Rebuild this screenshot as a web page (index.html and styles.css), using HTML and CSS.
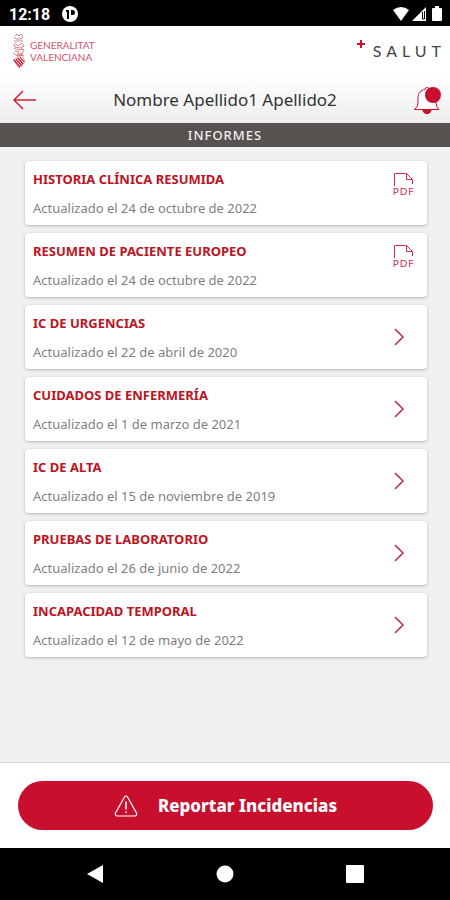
FILE: index.html
```html
<!DOCTYPE html>
<html lang="es">
<head>
  <meta charset="UTF-8">
  <meta name="viewport" content="width=device-width, initial-scale=1.0">
  <title>Informes</title>
  <link rel="stylesheet" href="styles.css">
</head>
<body>
  <div class="status-bar">
    <span class="hora">12:18</span>
    <svg width="16" height="16" viewBox="0 0 16 16">
      <circle cx="8" cy="8" r="8" fill="#fff"/>
      <path d="M4 4h3v9H5V6H4zM9 4h1.500a2.500 2.500 0 0 1 0 5H9z" fill="#000"/>
    </svg>
    <div class="status-icons">
      <svg width="18" height="16" viewBox="0 0 18 16"><path d="M1 4q8-6 16 0L9 15z" fill="#fff"/></svg>
      <svg width="14" height="16" viewBox="0 0 14 16">
        <path d="M14 1v14H0z" fill="#fff"/>
        <path d="M10.500 6v7h2V5" fill="none" stroke="#000" stroke-width="1"/>
      </svg>
      <svg class="bateria" width="10" height="16" viewBox="0 0 10 16"><path d="M3 0h4v2h2q1 0 1 1v11q0 1-1 1H1q-1 0-1-1V3q0-1 1-1h2z" fill="#fff"/></svg>
    </div>
  </div>

  <header class="marca">
    <div class="generalitat">
      <svg width="14" height="36" viewBox="0 0 14 36" fill="none" stroke="#d0606f">
        <path d="M3 3l2-2 2 2 2-2 2 3-2 2H4L2 4M2 8h9M3 10l3 3 4-3 2 3-4 2-5-1-1-3M2 15l4 2 5-1M3 18l4 1-2 3 5-1 2-4-3-1M1 20l4 3 5-1M8 20l4 3" stroke-width=".8"/>
        <path d="M1 27L10 22l3 7-6 6z" stroke-width=".6"/>
        <path d="M2 27l6 7M4 26l6 7M6 25l5 6M8 24l4 5" stroke="#c4122d" stroke-width="1.200"/>
      </svg>
      <div class="generalitat-texto">
        <span>GENERALITAT</span>
        <span>VALENCIANA</span>
      </div>
    </div>
    <div class="salut">
      <svg width="8" height="8" viewBox="0 0 8 8"><path d="M4 0v8M0 4h8" stroke="#c8102e" stroke-width="2"/></svg>
      <span>SALUT</span>
    </div>
  </header>

  <nav class="cabecera">
    <button class="icon-btn" type="button" aria-label="Volver">
      <svg width="24" height="20" viewBox="0 0 24 20" fill="none" stroke="#c8202e" stroke-width="1.500">
        <path d="M10 1L1 10l9 9M1 10h22"/>
      </svg>
    </button>
    <h1>Nombre Apellido1 Apellido2</h1>
    <button class="icon-btn" type="button" aria-label="Notificaciones">
      <svg width="28" height="28" viewBox="0 0 28 28">
        <path d="M9 23h10q-1 5-5 5t-5-5z" fill="#c8102e"/>
        <path d="M1.500 23.500h24.500q-3-2.500-3-6.500v-5c0-5-3-8-7-8.500q0-2-2-2t-2 2c-4 .5-7 3.500-7 8.500v5q0 4-3.500 6.500z" fill="#fff" stroke="#c8102e"/>
        <path d="M10 24h8q-1 4-4 4t-4-4z" fill="#c8102e"/>
        <circle cx="20" cy="9" r="8" fill="#c8102e"/>
      </svg>
    </button>
  </nav>

  <h2 class="seccion">INFORMES</h2>

  <main class="informes">
    <a class="card" href="#">
      <div>
        <h3>HISTORIA CLÍNICA RESUMIDA</h3>
        <p>Actualizado el 24 de octubre de 2022</p>
      </div>
      <div class="pdf">
        <svg width="22" height="14" viewBox="0 0 22 14"><path d="M1.500 14V1.500h12l6 6V12M13.500 1.500v6h6" fill="none" stroke="#c8304a"/></svg>
        <span>PDF</span>
      </div>
    </a>
    <a class="card" href="#">
      <div>
        <h3>RESUMEN DE PACIENTE EUROPEO</h3>
        <p>Actualizado el 24 de octubre de 2022</p>
      </div>
      <div class="pdf">
        <svg width="22" height="14" viewBox="0 0 22 14"><path d="M1.500 14V1.500h12l6 6V12M13.500 1.500v6h6" fill="none" stroke="#c8304a"/></svg>
        <span>PDF</span>
      </div>
    </a>
    <a class="card" href="#">
      <div>
        <h3>IC DE URGENCIAS</h3>
        <p>Actualizado el 22 de abril de 2020</p>
      </div>
      <svg class="flecha" viewBox="0 0 10 18"><path d="M1 1l8 8-8 8"/></svg>
    </a>
    <a class="card" href="#">
      <div>
        <h3>CUIDADOS DE ENFERMERÍA</h3>
        <p>Actualizado el 1 de marzo de 2021</p>
      </div>
      <svg class="flecha" viewBox="0 0 10 18"><path d="M1 1l8 8-8 8"/></svg>
    </a>
    <a class="card" href="#">
      <div>
        <h3>IC DE ALTA</h3>
        <p>Actualizado el 15 de noviembre de 2019</p>
      </div>
      <svg class="flecha" viewBox="0 0 10 18"><path d="M1 1l8 8-8 8"/></svg>
    </a>
    <a class="card" href="#">
      <div>
        <h3>PRUEBAS DE LABORATORIO</h3>
        <p>Actualizado el 26 de junio de 2022</p>
      </div>
      <svg class="flecha" viewBox="0 0 10 18"><path d="M1 1l8 8-8 8"/></svg>
    </a>
    <a class="card" href="#">
      <div>
        <h3>INCAPACIDAD TEMPORAL</h3>
        <p>Actualizado el 12 de mayo de 2022</p>
      </div>
      <svg class="flecha" viewBox="0 0 10 18"><path d="M1 1l8 8-8 8"/></svg>
    </a>
  </main>

  <footer class="pie">
    <button class="reportar" type="button">
      <svg width="24" height="22" viewBox="0 0 24 22" fill="none" stroke="#fff" stroke-linecap="round">
        <path d="M10.500 2q1.500-2 3 0l9 16q1 3-2 3h-17q-3 0-2-3z" stroke-width="1.200"/>
        <path d="M12 7v7M12 17v.5" stroke-width="1.500"/>
      </svg>
      Reportar Incidencias
    </button>
  </footer>

  <div class="nav-android">
    <button class="icon-btn" type="button" aria-label="Atrás">
      <svg width="18" height="18" viewBox="0 0 18 18"><path d="M17 0v18L1 9z" fill="#fff"/></svg>
    </button>
    <button class="icon-btn" type="button" aria-label="Inicio">
      <svg width="18" height="18" viewBox="0 0 18 18"><circle cx="9" cy="9" r="8.500" fill="#fff"/></svg>
    </button>
    <button class="icon-btn" type="button" aria-label="Recientes">
      <svg width="18" height="18" viewBox="0 0 18 18"><rect width="18" height="18" rx="1" fill="#fff"/></svg>
    </button>
  </div>
</body>
</html>
```

FILE: styles.css
```css
* {
  box-sizing: border-box;
}

body {
  margin: 0;
  min-height: 100vh;
  display: flex;
  flex-direction: column;
  font-family: "Noto Sans", "Open Sans", sans-serif;
  background: #f0f0f0;
}

h1, h2, h3, p {
  margin: 0;
}

svg {
  display: block;
  flex: none;
}

.icon-btn {
  padding: 0;
  border: none;
  background: none;
  cursor: pointer;
}

.status-bar {
  display: flex;
  align-items: center;
  gap: 12px;
  height: 26px;
  padding: 2px 8px 0 9px;
  background: #000;
  color: #fff;
}

.hora {
  font: bold 16px Roboto, sans-serif;
}

.status-icons {
  display: flex;
  gap: 2px;
  margin-left: auto;
}

.bateria {
  margin-left: 4px;
}

.marca {
  display: flex;
  justify-content: space-between;
  align-items: center;
  height: 50px;
  padding: 0 9px 0 12px;
  background: #fff;
}

.generalitat {
  display: flex;
  align-items: center;
  gap: 4px;
}

.generalitat-texto {
  display: flex;
  flex-direction: column;
  font-family: Lato, sans-serif;
  font-size: 10px;
  line-height: 12px;
  color: #cf5566;
}

.salut {
  display: flex;
  gap: 8px;
}

.salut svg {
  margin-top: 1px;
}

.salut span {
  font-family: Lato, sans-serif;
  font-size: 16px;
  line-height: 24px;
  letter-spacing: 5px;
  margin-right: -5px;
  color: #444;
}

.cabecera {
  display: flex;
  justify-content: space-between;
  align-items: center;
  height: 47px;
  padding: 0 9px 0 13px;
  background: linear-gradient(#fff, #ededed);
}

.cabecera h1 {
  font-size: 17px;
  font-weight: normal;
  line-height: 24px;
  color: #333;
}

.seccion {
  height: 24px;
  font-size: 13px;
  font-weight: 500;
  line-height: 24px;
  letter-spacing: 1px;
  text-align: center;
  color: #f0f0f0;
  background: #575150;
}

.informes {
  flex: 1;
  display: flex;
  flex-direction: column;
  gap: 8px;
  padding: 14px 23px 14px 25px;
}

.card {
  display: flex;
  justify-content: space-between;
  align-items: center;
  height: 64px;
  padding: 0 12px 0 8px;
  border-radius: 4px;
  background: #fff;
  box-shadow: 0 1px 3px rgba(0, 0, 0, 0.25);
  text-decoration: none;
}

.card h3 {
  margin-bottom: 9px;
  font-size: 13px;
  font-weight: bold;
  line-height: 20px;
  color: #bd1322;
}

.card p {
  font-size: 13px;
  line-height: 20px;
  color: #808080;
}

.pdf {
  align-self: flex-start;
  margin-top: 11px;
  font-family: Lato, sans-serif;
  font-size: 10px;
  line-height: 11px;
  letter-spacing: 1px;
  color: #c8304a;
}

.flecha {
  width: 10px;
  height: 18px;
  margin-right: 11px;
  fill: none;
  stroke: #c8203a;
  stroke-width: 1.500;
}

.pie {
  padding: 18px 17px 18px 18px;
  border-top: 1px solid #d8d8d8;
  background: #fff;
}

.reportar {
  display: flex;
  justify-content: center;
  align-items: center;
  gap: 20px;
  width: 100%;
  height: 49px;
  border: none;
  border-radius: 25px;
  background: #c8102e;
  color: #fff;
  font-family: inherit;
  font-size: 17px;
  font-weight: 800;
  cursor: pointer;
}

.nav-android {
  display: flex;
  justify-content: center;
  align-items: center;
  gap: 112px;
  height: 52px;
  background: #000;
}
```
